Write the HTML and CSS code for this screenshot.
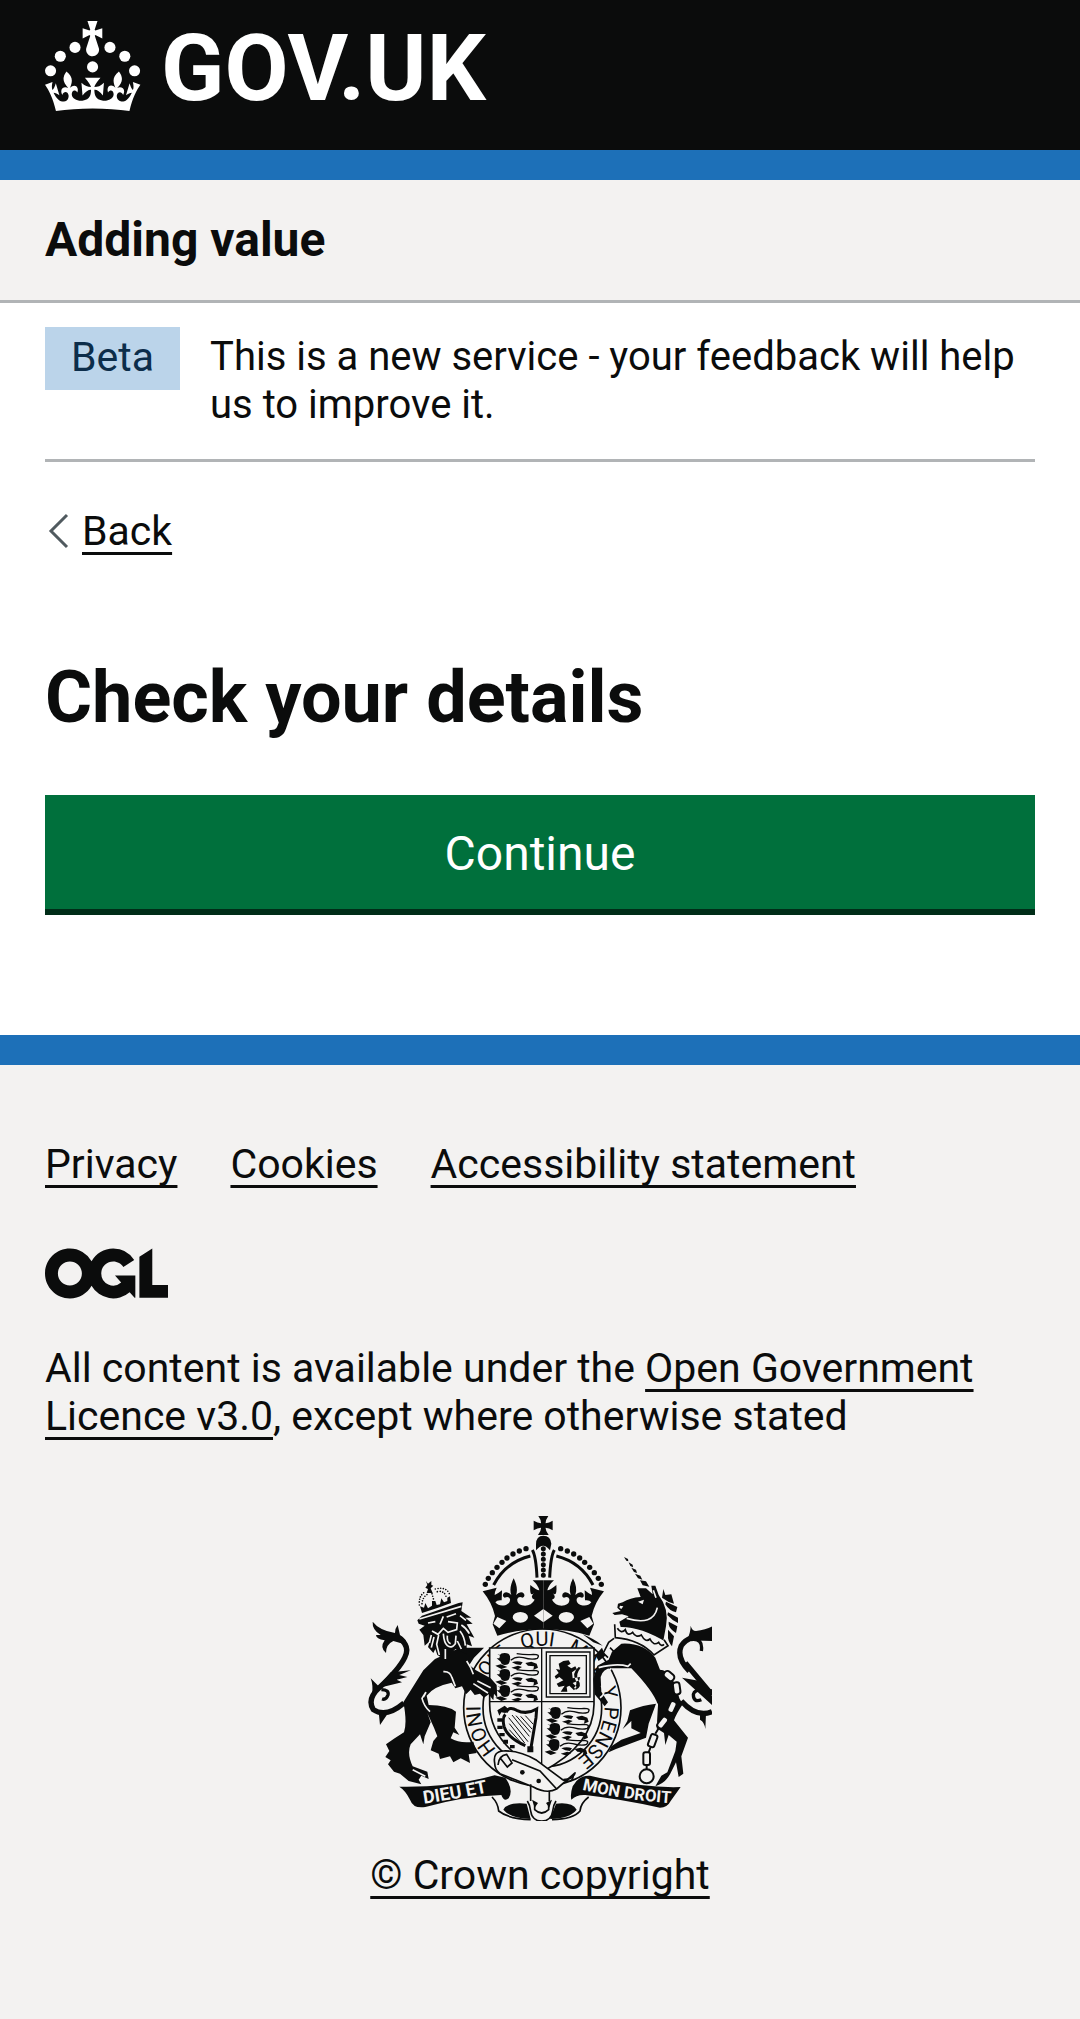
FILE: index.html
```html
<!DOCTYPE html>
<html lang="en">
<head>
<meta charset="utf-8">
<meta name="viewport" content="width=device-width, initial-scale=1">
<title>Check your details - Adding value - GOV.UK</title>
<link rel="stylesheet" href="styles.css">
</head>
<body>
<header class="header">
  <a class="header-logo" href="#">
    <svg class="header-crown" viewBox="0 0 64 60" fill="currentColor" aria-hidden="true">
      <circle cx="20" cy="17.6" r="3.7"/><circle cx="10.2" cy="23.5" r="3.7"/><circle cx="3.7" cy="33.2" r="3.7"/>
      <circle cx="31.7" cy="30.6" r="3.7"/><circle cx="43.3" cy="17.6" r="3.7"/><circle cx="53.2" cy="23.5" r="3.7"/><circle cx="59.7" cy="33.2" r="3.7"/>
      <path d="M33.1,9.8c.2-.1.3-.3.5-.5l4.6,2.4v-6.8l-4.6,1.5c-.1-.2-.3-.3-.5-.5l1.9-5.9h-6.7l1.9,5.9c-.2.1-.3.3-.5.5l-4.6-1.5v6.8l4.6-2.4c.1.2.3.3.5.5l-2.6,8c-.9,2.8,1.2,5.7,4.1,5.7h0c3,0,5.1-2.9,4.1-5.7l-2.6-8ZM37,37.9s-3.4,3.8-4.1,6.1c2.2,0,4.2-.5,6.4-2.8l-.7,8.5c-2-2.8-4.4-4.1-5.7-3.8.1,3.1.5,6.7,5.8,7.2,3.7.3,6.7-1.5,7-3.8.4-2.6-2-4.3-3.7-1.6-1.4-4.5,2.4-6.1,4.9-3.2-1.9-4.5-1.8-7.7,2.4-10.9,3,4,2.6,7.3-1.2,11.1,2.4-1.3,6.2,0,4,4.6-1.2-2.8-3.7-2.2-4.2.2-.3,1.7.7,3.7,3,4.2,1.9.3,4.7-.9,7-5.9-1.3,0-2.4.7-3.9,1.7l2.4-8c.6,2.3,1.4,3.7,2.2,4.5.6-1.6.5-2.8,0-5.3l5,1.8c-2.6,3.6-5.2,8.7-7.3,17.5-7.4-1.1-15.7-1.7-24.5-1.7h0c-8.8,0-17.1.6-24.5,1.7-2.1-8.9-4.7-13.9-7.3-17.5l5-1.8c-.5,2.5-.6,3.7,0,5.3.8-.8,1.6-2.3,2.2-4.5l2.4,8c-1.5-1-2.6-1.7-3.9-1.7,2.3,5,5.2,6.2,7,5.9,2.3-.4,3.3-2.4,3-4.2-.5-2.4-3-3.1-4.2-.2-2.2-4.6,1.6-6,4-4.6-3.7-3.7-4.2-7.1-1.2-11.1,4.2,3.2,4.3,6.4,2.4,10.9,2.5-2.8,6.3-1.3,4.9,3.2-1.8-2.7-4.1-1-3.7,1.6.3,2.3,3.3,4.1,7,3.8,5.4-.5,5.7-4.2,5.8-7.2-1.3-.2-3.7,1-5.7,3.8l-.7-8.5c2.2,2.3,4.2,2.7,6.4,2.8-.7-2.3-4.1-6.1-4.1-6.1h10.6Z"/>
    </svg>
    <span class="header-name">GOV.UK</span>
  </a>
</header>

<div class="service"><span class="service-name">Adding value</span></div>

<div class="container">
  <div class="phase-banner">
    <strong class="tag">Beta</strong>
    <span class="phase-text">This is a new service - your feedback will help us to improve it.</span>
  </div>
  <a class="back-link" href="#">
    <svg class="back-icon" viewBox="0 0 22 36" aria-hidden="true"><path d="M19 2 3 18l16 16"/></svg>
    <span class="back-text">Back</span>
  </a>
  <main class="main">
    <h1 class="heading">Check your details</h1>
    <button class="button" type="submit">Continue</button>
  </main>
</div>

<footer class="footer">
  <ul class="footer-links">
    <li><a class="link" href="#">Privacy</a></li>
    <li><a class="link" href="#">Cookies</a></li>
    <li><a class="link" href="#">Accessibility statement</a></li>
  </ul>
  <svg class="ogl" viewBox="0 0 483.2 195.7" fill="currentColor" role="img" aria-label="Open Government Licence">
    <path d="M421.5 142.8V.1l-50.7 32.3v161.1h112.4v-50.7zm-122.3-9.6A47.12 47.12 0 0 1 221 97.8c0-26 21.1-47.1 47.1-47.1 16.7 0 31.4 8.7 39.7 21.8l42.7-27.2A97.63 97.63 0 0 0 268.1 0c-36.5 0-68.3 20.1-85.1 49.7A98 98 0 0 0 97.8 0C43.9 0 0 43.9 0 97.8s43.9 97.8 97.8 97.8c36.5 0 68.3-20.1 85.1-49.7a97.76 97.76 0 0 0 149.6 25.4l19.4 22.2h3v-87.8h-80l24.3 27.5zM97.8 145c-26 0-47.1-21.1-47.1-47.1s21.1-47.1 47.1-47.1 47.1 21.1 47.1 47.1S123.8 145 97.8 145"/>
  </svg>
  <p class="licence">All content is available under the <a class="link" href="#">Open Government Licence v3.0</a>, except where otherwise stated</p>
  <a class="copyright" href="#">
    <svg class="crest" viewBox="24 42 1032 918" aria-hidden="true">
      <defs>
        <path id="garter-line" d="M547 806A186 186 0 0 1 547 434A186 186 0 0 1 547 806"/>
        <path id="left-motto" d="M192 908Q300 892 412 868"/>
        <path id="right-motto" d="M666 866Q790 896 925 906"/>
        <g id="half-crown">
          <g class="ink">
            <circle cx="376" cy="250" r="8"/><circle cx="385" cy="232" r="8"/><circle cx="397" cy="215" r="8"/><circle cx="411" cy="199" r="8"/><circle cx="426" cy="184" r="8"/><circle cx="441" cy="171" r="8"/><circle cx="459" cy="159" r="8"/><circle cx="478" cy="150" r="8"/><circle cx="498" cy="143" r="8"/>
            <path d="M368 271 410 260Q404 272 404 282Q414 278 426 268L425 298Q412 296 406 304Q418 318 438 312Q452 306 450 294Q446 284 434 290Q426 288 430 278Q440 268 454 282Q446 262 461 232Q476 262 468 282Q482 268 492 278Q496 288 488 290Q476 284 472 294Q470 308 486 313Q512 318 524 296Q508 290 522 276Q508 290 511 252Q530 268 538 268Q534 252 518 238H550V385Q480 384 412 404L398 370 405 345Q396 305 368 271Z"/>
          </g>
          <path class="ink-line w9" d="M401 252Q436 184 511 165M517 147Q528 165 531 230"/>
          <path class="paper" d="m412 348 27 12-21 22-18-14zM458 349a23 16 0 1 0 46 0a23 16 0 1 0-46 0zM522 344l28-20v40z"/>
        </g>
        <g id="passant">
          <path class="ink-line w4" d="M44 14Q60 0 82 6Q108 14 124 8Q134 -4 112 -4Q90 -2 62 -6"/>
          <path class="ink" d="M4 -6 12 0 10 8 2 8 14 18Q18 32 36 26 44 18 42 2 40 -8 26 -8 14 -8 12 -2zM48 20Q64 14 80 20L74 28 60 26zM-2 30 14 26 34 34 16 40zM46 36 66 30 78 34 64 42zM88 22 106 18 122 24 126 36 112 42 114 32 96 30z"/>
        </g>
      </defs>

      <!-- garter -->
      <circle class="paper ink-stroke w5" cx="547" cy="620" r="236"/>
      <circle class="outline w5" cx="547" cy="620" r="178"/>
      <g class="garter-text">
        <text><textPath href="#garter-line" startOffset="154">HONI</textPath></text>
        <text><textPath href="#garter-line" startOffset="350">SOIT</textPath></text>
        <text><textPath href="#garter-line" startOffset="522">QUI</textPath></text>
        <text><textPath href="#garter-line" startOffset="660">MAL</textPath></text>
        <text><textPath href="#garter-line" startOffset="816">Y</textPath></text>
        <text><textPath href="#garter-line" startOffset="872">PENSE</textPath></text>
      </g>

      <!-- shield -->
      <path class="paper ink-stroke w5" d="M389 441H702V610Q702 730 547 812Q389 730 389 610Z"/>
      <path class="outline w4" d="M545 441V812M389 602H702"/>
      <use href="#passant" x="408" y="464"/><use href="#passant" x="408" y="512"/><use href="#passant" x="408" y="560"/>
      <use href="#passant" x="560" y="626"/><use href="#passant" x="558" y="674"/><use href="#passant" x="556" y="722"/>
      <path class="outline w4" d="M559 453H690V588H559Z"/>
      <path class="outline w4" d="M570 464H679V578H570Z"/>
      <path class="ink" d="m596 488 14-8 16-2 6 10-10 6 12 8 12-6 4 8-14 10 2 18 22-4-2 10-20 8 12 12-8 10-14-14-8 4 2 14h-20l12-18-18 4-6-10 20-10-12-10-10 6-4-8 12-10-8-12 12 2zM648 566Q668 556 654 536Q646 520 662 500L656 498Q634 516 648 540Q652 552 642 560Z"/>
      <path class="ink-line w9" d="M438 634Q448 614 470 628Q500 642 530 624L528 650 512 746M436 640Q426 650 432 676 442 710 496 734"/>
      <path class="ink-line w3" d="M446 650 504 722M448 668 494 726M456 642 508 706M468 644 512 694M482 646 516 684M448 686 482 724M496 644 520 670"/>
      <path class="ink" d="m412 628 22-14 14 12-12 10-12-2-6 10zM412 652h14v10h-14zM412 674h16v10h-16zM418 696h16v10h-16zM430 716h14v12h-14zM450 732h14v10h-14zM502 736h18v18h-18z"/>

      <!-- royal crown -->
      <use href="#half-crown"/>
      <use href="#half-crown" transform="translate(1100 0) scale(-1 1)"/>
      <path class="ink" d="M535 45H565Q556 58 557 67Q567 66 578 59V88Q567 80 557 80Q556 90 566 102H534Q544 90 543 80Q533 80 521 88V59Q533 66 543 67Q544 58 535 45ZM528 130Q528 104 550 104T574 128L570 148Q550 120 528 148Z"/>
      <path class="ink-line dots" d="M550 143V226"/>

      <!-- lion -->
      <path class="ink" d="M190 508 225 474 300 440H372L342 470 328 492 348 508 392 532 410 552 412 590 402 578 400 598 386 580 372 590 360 578 344 582 332 566 318 580 306 556 286 562 275 545Q220 556 200 584L206 612Q262 612 288 632L284 680 298 702 280 694 272 712Q300 728 340 722L350 756 326 760 330 786 302 772 280 784 270 766 240 774 236 758 212 748 220 720 232 706 222 680 202 636 212 664 194 706 190 730 180 700 152 730Q140 758 158 796L202 812 206 834 184 824 176 836 184 850 146 840 120 818 102 812 84 790 92 778 76 768 88 750 78 730 104 712 132 694Q142 664 130 604Z"/>
      <path class="paper-line w5" d="M250 512Q270 510 276 530L286 556M190 588Q206 560 186 592Q192 616 210 632M320 480Q334 500 340 520M170 794 200 806M158 806 196 826M352 540 392 560M340 548 384 576"/>
      <path class="ink-line w16" d="M118 412Q152 436 134 470Q118 504 58 560Q20 594 40 626Q78 652 132 606"/>
      <path class="ink-line w10" d="M64 566Q88 566 84 582Q78 598 66 594"/>
      <path class="ink" d="M38 362Q58 388 105 396Q104 384 113 372L120 402Q140 414 142 432L100 420Q78 430 78 456 58 440 74 418 48 414 48 402L62 402Q36 386 38 362ZM52 562 92 514 152 508 118 522 142 528 110 536 126 544ZM32 532 56 556 36 580Q40 552 32 532ZM56 632 82 640 60 672Z"/>
      <path class="ink" d="M172 358 186 344 296 306 308 304 304 330 334 350 316 350 338 368 320 370 343 410 326 404 336 436 320 430 320 460 300 450 286 444 256 478 232 462 226 444 220 456 204 438 210 420 194 434 190 402 178 386 194 374 176 368Z"/>
      <path class="paper-line w5" d="M178 354 304 316M204 366 226 362M260 348 288 338M240 370 250 346M264 362 292 366 290 386 264 394 250 382 234 400 216 390M236 402 230 430 238 462M250 398Q252 426 262 434 274 444 286 428L288 404M262 404Q260 424 272 428M300 390Q314 408 316 434M304 372Q320 382 328 398M300 344 318 358M214 402 208 426M222 408 214 440M256 444V474M292 420 304 444"/>
      <path class="ink" d="m198 240 6 8 10-8 0 12 6 2-8 8 6 14h-18l4-12-8-4 6-8zM186 336 180 316 192 320 196 306 204 322 216 314 216 300 226 300 230 312 240 310 244 292 252 304 262 300 262 290 270 286 273 306 234 320Z"/>
      <path class="ink-line lion-dots" d="M178 312Q176 280 198 272M226 264Q258 256 268 278M186 308Q188 288 202 280M216 278 222 300M232 272Q252 268 258 286"/>

      <!-- unicorn -->
      <g transform="translate(540 0)">
        <path class="ink" d="m252 168 12 6 1 7-6-2zM266 184l12 7 1 8-8-4zM274 200l14 6 3 10-9-3zM285 218l16 6 6 12-13-4zM300 238l18 3 10 16-20-4z"/>
        <path class="ink" d="M217 336 242 330 232 320 234 308 248 304Q270 290 302 288L292 262 318 262 338 280 334 254 346 254 356 282Q388 324 378 376L368 430Q328 396 272 392L242 378 238 362 266 346 246 340 224 342Z"/>
        <path class="ink" d="M370 264 376 282 394 280 402 308 Q384 304 366 290ZM378 302 412 318 408 334Q388 330 376 310ZM384 334 414 350 414 366Q396 358 382 342ZM386 362 412 376 408 396Q388 384 386 370ZM384 386 402 406 396 436Q382 420 384 400Z"/>
        <path class="paper" d="M294 302 312 296 308 310ZM240 314l10 2-6 8-6-4zM224 370 240 378Q300 376 380 424L382 436 342 466Q300 436 230 430L222 400Z"/>
        <path class="paper-line w5" d="M260 352Q340 376 352 320M340 268 348 290"/>
        <path class="ink-line w5" d="M224 370 226 410Q300 416 342 462L384 434 372 416M232 382Q244 400 256 386 262 408 278 394 288 412 304 402 316 426 330 414 340 436 356 424 364 438 372 430M222 412 206 424 190 456 204 470M210 440 232 462"/>
        <path class="ink" d="M216 452 244 428Q310 424 346 470L360 506Q398 508 418 592L428 610Q408 640 402 658L444 710 424 766 430 818 416 828 408 784 390 820Q376 846 346 856L364 824 382 814 406 750 410 722 386 702 376 732 372 696 350 682 354 612Q340 570 274 502L218 502Q190 500 182 528L184 572 204 604 194 616 164 580 160 534 172 494 206 476ZM248 684 262 660 270 628Q310 612 348 608L326 668 318 710 228 744 206 754 214 736 244 716 302 696 274 682 274 660Z"/>
        <path class="ink" d="M128 400Q160 412 188 434L160 424ZM166 462 186 440 196 464 176 480Z"/>
        <path class="paper-line w5" d="M176 500Q230 486 264 496L272 488M180 590Q200 580 184 554M196 520 214 502M352 608Q342 630 350 670"/>
        <path class="ink-line w16" d="M448 510Q408 470 424 434Q446 400 516 402M424 600Q470 652 516 632M516 582 436 486"/>
        <path class="ink-line w10" d="M452 416Q490 410 484 450M516 570Q466 558 460 580Q460 606 484 596"/>
        <path class="ink" d="M452 374Q456 390 468 390Q500 386 520 374V420L440 418Q452 396 452 374ZM426 530 480 540 520 590V616ZM480 640 498 638 496 684Q494 664 480 656Z"/>
        <g class="chain">
          <rect x="376" y="508" width="22" height="34" rx="10" transform="rotate(-50 387 525)"/><rect x="400" y="544" width="20" height="36" rx="8" transform="rotate(-8 410 562)"/><rect x="386" y="600" width="20" height="36" rx="8" transform="rotate(24 396 618)"/><rect x="358" y="646" width="20" height="38" rx="8" transform="rotate(38 368 665)"/><rect x="328" y="700" width="20" height="38" rx="6" transform="rotate(20 338 719)"/><rect x="310" y="754" width="20" height="38" rx="6"/><circle cx="320" cy="826" r="21"/>
          <path d="m404 582-4 16M386 636l-8 10M356 682l-10 16M332 738l-6 16M320 792v12"/>
        </g>
      </g>

      <!-- buckle and strap -->
      <path class="paper ink-stroke w5" d="M404 786Q398 752 430 750Q480 748 530 778L608 836Q640 850 640 820L590 864Q560 880 520 858L420 818Q404 806 404 786Z"/>
      <path class="outline w5" d="M414 792Q416 764 440 760L456 786 442 798 420 770M456 776 540 810 590 864M610 836Q640 836 646 814M512 850V900M568 870V900"/>
      <circle class="ink" cx="487" cy="814" r="7"/><circle class="ink" cx="536" cy="840" r="7"/>

      <!-- motto scroll -->
      <path class="ink" d="M118 857Q270 860 404 823L436 830Q462 868 446 892Q432 904 424 882Q310 886 196 918Q160 924 150 896Q136 868 118 857ZM962 858Q850 862 690 824 656 822 638 856 630 880 634 896 650 880 676 882 780 894 900 920 922 920 932 900Z"/>
      <path class="outline w5" d="M396 888Q414 906 416 930Q446 954 512 956M686 888Q662 906 660 930Q640 954 576 956M502 900Q510 912 512 930Q516 960 545 960T578 930Q580 912 588 900M524 904V926Q545 946 566 926V904"/>
      <path class="ink" d="M430 926Q444 902 500 908L512 954Q452 952 430 926ZM650 926Q636 902 588 908L570 954Q630 952 650 926ZM516 896l18 10-10 14zM576 896l-18 10 10 14z"/>
      <g class="motto-text">
        <text class="motto-left"><textPath href="#left-motto">DIEU ET</textPath></text>
        <text class="motto-right"><textPath href="#right-motto">MON DROIT</textPath></text>
      </g>
    </svg>
    <span class="copyright-text">© Crown copyright</span>
  </a>
</footer>
</body>
</html>
```
FILE: styles.css
```css
*,
*::before,
*::after {
  box-sizing: border-box;
}

body {
  display: flex;
  flex-direction: column;
  min-height: 100vh;
  margin: 0;
  background: #fff;
  color: #0b0c0c;
  font-family: Roboto, "Liberation Sans", Arial, sans-serif;
  font-size: 41px;
  line-height: 48px;
}

a {
  color: inherit;
}

.header {
  padding: 21px 45px 39px;
  background: #0b0c0c;
  border-bottom: 30px solid #1d70b8;
}

.header-logo {
  display: flex;
  align-items: flex-end;
  gap: 20px;
  width: fit-content;
  height: 90px;
  color: #fff;
  text-decoration: none;
}

.header-crown {
  width: 96px;
  height: 90px;
}

.header-name {
  font-size: 93px;
  font-weight: 700;
  line-height: 84px;
}

.service {
  padding: 30px 45px;
  background: #f3f2f1;
  border-bottom: 3px solid #b1b4b6;
}

.service-name {
  display: block;
  font-size: 48px;
  font-weight: 700;
  line-height: 60px;
}

.container {
  padding: 0 45px;
}

.phase-banner {
  display: flex;
  align-items: flex-start;
  gap: 30px;
  padding: 24px 0 30px;
  border-bottom: 3px solid #b1b4b6;
}

.tag {
  flex: none;
  padding: 6px 26px 9px;
  background: #bbd4ea;
  color: #0c2d4a;
  font-weight: 400;
}

.phase-text {
  padding-top: 6px;
  font-size: 40px;
}

.back-link {
  display: flex;
  align-items: center;
  gap: 12px;
  width: fit-content;
  margin-top: 45px;
  padding-left: 3px;
  text-decoration: none;
}

.back-icon {
  width: 22px;
  height: 36px;
  fill: none;
  stroke: #505a5f;
  stroke-width: 3;
}

.back-text,
.link,
.copyright-text {
  text-decoration: underline;
  text-decoration-thickness: 3px;
  text-decoration-skip-ink: none;
  text-underline-offset: 7px;
}

.main {
  padding: 105px 0 120px;
}

.heading {
  margin: 0 0 60px;
  font-size: 72px;
  font-weight: 700;
  line-height: 75px;
}

.button {
  display: block;
  width: 100%;
  padding: 30px 30px 27px;
  border: 0;
  border-bottom: 6px solid #002d18;
  border-radius: 0;
  background: #00703c;
  color: #fff;
  font-family: inherit;
  font-size: 48px;
  line-height: 57px;
}

.footer {
  display: flex;
  flex: 1;
  flex-direction: column;
  align-items: flex-start;
  padding: 75px 45px 120px;
  background: #f3f2f1;
  border-top: 30px solid #1d70b8;
}

.footer-links {
  display: flex;
  flex-wrap: wrap;
  gap: 15px 53px;
  margin: 0;
  padding: 0;
  list-style: none;
}

.ogl {
  width: 123px;
  height: 51px;
  margin-top: 60px;
}

.licence {
  margin: 45px 0 75px;
}

.copyright {
  display: flex;
  flex-direction: column;
  align-items: center;
  align-self: center;
  gap: 30px;
  text-decoration: none;
}

.crest {
  width: 344px;
  height: 306px;
}

.ink { fill: #0b0c0c; }
.paper { fill: #f3f2f1; }
.outline { fill: none; stroke: #0b0c0c; }
.ink-stroke { stroke: #0b0c0c; }
.ink-line { fill: none; stroke: #0b0c0c; }
.paper-line { fill: none; stroke: #f3f2f1; }
.w3 { stroke-width: 3; }
.w4 { stroke-width: 4; }
.w5 { stroke-width: 5; }
.w9 { stroke-width: 9; }
.w10 { stroke-width: 10; }
.w16 { stroke-width: 16; }
.dots { stroke-width: 15; stroke-dasharray: 0 16; stroke-linecap: round; }
.lion-dots { stroke-width: 5; stroke-dasharray: 0 8; stroke-linecap: round; }
.chain { fill: #f3f2f1; stroke: #0b0c0c; stroke-width: 6; }

.garter-text {
  fill: #0b0c0c;
  font-size: 60px;
}

.motto-text {
  fill: #f3f2f1;
  font-weight: 700;
}

.motto-left { font-size: 54px; }
.motto-right { font-size: 50px; }
```
